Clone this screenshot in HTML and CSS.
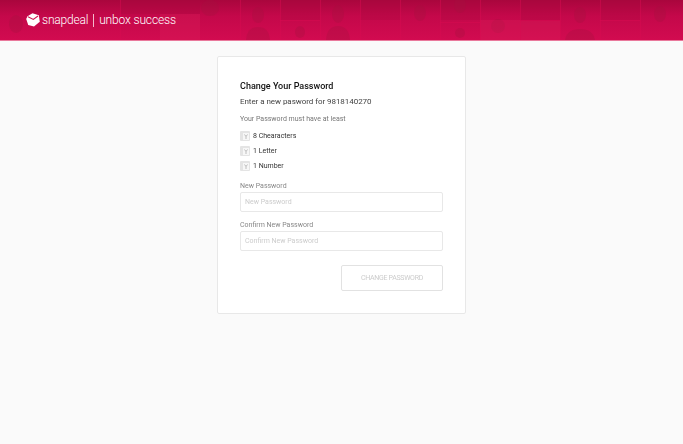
FILE: index.html
```html
<!DOCTYPE html>
<html lang="en-US">

<head>
    <meta charset="UTF-8">
    <meta name="viewport" content="width=device-width, initial-scale=1">
    <title>Change Your Password</title>
    <link rel="stylesheet" href="styles.css">
</head>

<body>
    <header class="topbar">
        <!-- faded photo collage behind the logo -->
        <svg class="collage" xmlns="http://www.w3.org/2000/svg" width="683" height="40" viewBox="0 0 683 40">
            <g class="tile-dark">
                <rect x="280" y="0" width="40" height="20" />
                <rect x="360" y="0" width="40" height="20" />
                <rect x="520" y="0" width="40" height="20" />
                <rect x="440" y="0" width="40" height="20" />
                <rect x="600" y="0" width="40" height="20" />
                <rect x="120" y="0" width="80" height="14" />
            </g>
            <g class="person">
                <ellipse cx="258" cy="15" rx="6" ry="8" />
                <path d="M246 40q1-13 12-13t12 13z" />
                <ellipse cx="338" cy="14" rx="6" ry="9" />
                <path d="M326 40q1-14 12-14t12 14z" />
                <ellipse cx="420" cy="13" rx="6" ry="8" />
                <ellipse cx="460" cy="5" rx="6" ry="8" />
                <ellipse cx="460" cy="33" rx="5" ry="5" />
                <ellipse cx="498" cy="26" rx="7" ry="7" />
                <ellipse cx="580" cy="15" rx="6" ry="8" />
                <path d="M565 40q2-11 15-11t15 11z" />
                <ellipse cx="660" cy="14" rx="6" ry="8" />
                <ellipse cx="300" cy="32" rx="5" ry="6" />
                <ellipse cx="16" cy="24" rx="7" ry="9" />
                <ellipse cx="210" cy="8" rx="9" ry="8" />
            </g>
            <g class="tile-light">
                <rect x="480" y="20" width="40" height="20" />
                <rect x="520" y="21" width="40" height="19" />
                <rect x="160" y="14" width="40" height="26" />
            </g>
            <path class="seams" d="M120.500 0V40M240.500 0V40M280.500 0V40M320.500 0V40M360.500 0V40M400.500 0V40M440.500 0V40M480.500 0V40M520.500 0V40M560.500 0V40M600.500 0V40M640.500 0V40M280 20.500H320M440 22.500H480M520 20.500H560M600 20.500H640" />
        </svg>
        <div class="brand">
            <svg class="brand-mark" xmlns="http://www.w3.org/2000/svg" width="14" height="14" viewBox="0 0 14 14">
                <path class="mark-body" d="M6.500 .3 12.800 2.200 13.800 8.800 8 13.600 2.200 12 .2 6 1.500 3.200Z" />
                <path class="mark-crease" d="M2 3.800 7.300 6.400 12 3" />
            </svg>
            <span class="brand-name">snapdeal</span>
            <span class="brand-rule"></span>
            <span class="brand-tag">unbox success</span>
        </div>
    </header>

    <main class="page">
        <form class="card">
            <h1>Change Your Password</h1>
            <p class="lead">Enter a new pasword for 9818140270</p>
            <p class="hint">Your Password must have at least</p>
            <ul class="rules">
                <li>
                    <svg class="rule-icon" xmlns="http://www.w3.org/2000/svg" width="10" height="10" viewBox="0 0 10 10">
                        <rect class="rule-box" width="10" height="10" rx="1" />
                        <rect class="rule-inner" x="3" y="2" width="6" height="7" />
                        <path class="rule-tick" d="M4.500 3.500 6 5.500 7.500 3.500M6 5.500V8" />
                    </svg>
                    8 Chearacters
                </li>
                <li>
                    <svg class="rule-icon" xmlns="http://www.w3.org/2000/svg" width="10" height="10" viewBox="0 0 10 10">
                        <rect class="rule-box" width="10" height="10" rx="1" />
                        <rect class="rule-inner" x="3" y="2" width="6" height="7" />
                        <path class="rule-tick" d="M4.500 3.500 6 5.500 7.500 3.500M6 5.500V8" />
                    </svg>
                    1 Letter
                </li>
                <li>
                    <svg class="rule-icon" xmlns="http://www.w3.org/2000/svg" width="10" height="10" viewBox="0 0 10 10">
                        <rect class="rule-box" width="10" height="10" rx="1" />
                        <rect class="rule-inner" x="3" y="2" width="6" height="7" />
                        <path class="rule-tick" d="M4.500 3.500 6 5.500 7.500 3.500M6 5.500V8" />
                    </svg>
                    1 Number
                </li>
            </ul>
            <label class="field">
                <span>New Password</span>
                <input type="password" placeholder="New Password">
            </label>
            <label class="field">
                <span>Confirm New Password</span>
                <input type="password" placeholder="Confirm New Password">
            </label>
            <div class="actions">
                <button type="button" disabled>CHANGE PASSWORD</button>
            </div>
        </form>
    </main>
</body>

</html>
```

FILE: styles.css
```css
* {
    box-sizing: border-box;
}

html,
body {
    height: 100%;
}

body {
    margin: 0;
    background: #fafafa;
    font-family: Roboto, "Liberation Sans", sans-serif;
    color: #333;
    overflow: hidden;
}

/* Header */
.topbar {
    position: relative;
    height: 41px;
    background: linear-gradient(#a9063d, #c4084a 40%, #d20b50);
    border-bottom: 1px solid #e9789b;
}

.collage {
    position: absolute;
    top: 0;
    left: 0;
}

.tile-dark rect {
    fill: #a80a3e;
    opacity: .3;
}

.tile-light rect {
    fill: #dc2058;
    opacity: .3;
}

.person {
    fill: #a5123f;
    opacity: .32;
}

.seams {
    fill: none;
    stroke: #d80a50;
    stroke-width: 1;
    opacity: .5;
}

.brand {
    position: relative;
    display: flex;
    align-items: center;
    height: 40px;
    padding-left: 26px;
    color: #fff;
    font-size: 12px;
    font-weight: 300;
}

.brand-mark {
    margin-right: 2px;
}

.mark-body {
    fill: #fff;
}

.mark-crease {
    fill: none;
    stroke: #cf1450;
    stroke-width: 1.100;
}

.brand-name {
    letter-spacing: -.2px;
}

.brand-rule {
    width: 1px;
    height: 13px;
    margin: 0 5px;
    background: #f3b9cb;
}

.brand-tag {
    letter-spacing: -.15px;
}

/* Card */
.page {
    display: flex;
    justify-content: center;
    padding-top: 15px;
}

.card {
    width: 249px;
    height: 258px;
    margin-left: -1px;
    padding: 23px 22px 0 22px;
    background: #fff;
    border: 1px solid #e8e8e8;
    border-radius: 2px;
    will-change: transform;
}

h1 {
    margin: 0;
    font-size: 9px;
    line-height: 12px;
    font-weight: 500;
    letter-spacing: 0;
    color: #111;
}

.lead {
    margin: 4px 0 0;
    font-size: 8px;
    line-height: 11px;
    letter-spacing: -.05px;
    color: #444;
}

.hint {
    margin: 7px 0 0;
    font-size: 7px;
    line-height: 10px;
    letter-spacing: 0;
    color: #777;
}

.rules {
    margin: 4px 0 0;
    padding: 0;
    list-style: none;
}

.rules li {
    display: flex;
    align-items: center;
    height: 15px;
    font-size: 7px;
    letter-spacing: 0;
    color: #333;
}

.rule-icon {
    margin-right: 3px;
}

.rule-box {
    fill: #e4e4e4;
}

.rule-inner {
    fill: #f7f7f7;
}

.rule-tick {
    fill: none;
    stroke: #bdbdbd;
    stroke-width: 1;
}

.field {
    display: block;
    margin-top: 8px;
}

.field span {
    display: block;
    font-size: 7px;
    line-height: 10px;
    letter-spacing: 0;
    color: #888;
}

.field input {
    display: block;
    width: 203px;
    height: 20px;
    margin-top: 1px;
    padding: 0 4px;
    border: 1px solid #e8e8e8;
    border-radius: 2px;
    background: #fff;
    font-family: inherit;
    font-size: 7px;
    letter-spacing: 0;
    outline: none;
}

.field input::placeholder {
    color: #ccc;
    opacity: 1;
}

.actions {
    display: flex;
    justify-content: flex-end;
    margin-top: 14px;
}

.actions button {
    width: 102px;
    height: 26px;
    padding: 0;
    border: 1px solid #e2e2e2;
    border-radius: 2px;
    background: #fff;
    font-family: inherit;
    font-size: 7px;
    letter-spacing: -.3px;
    color: #ccc;
}
```
